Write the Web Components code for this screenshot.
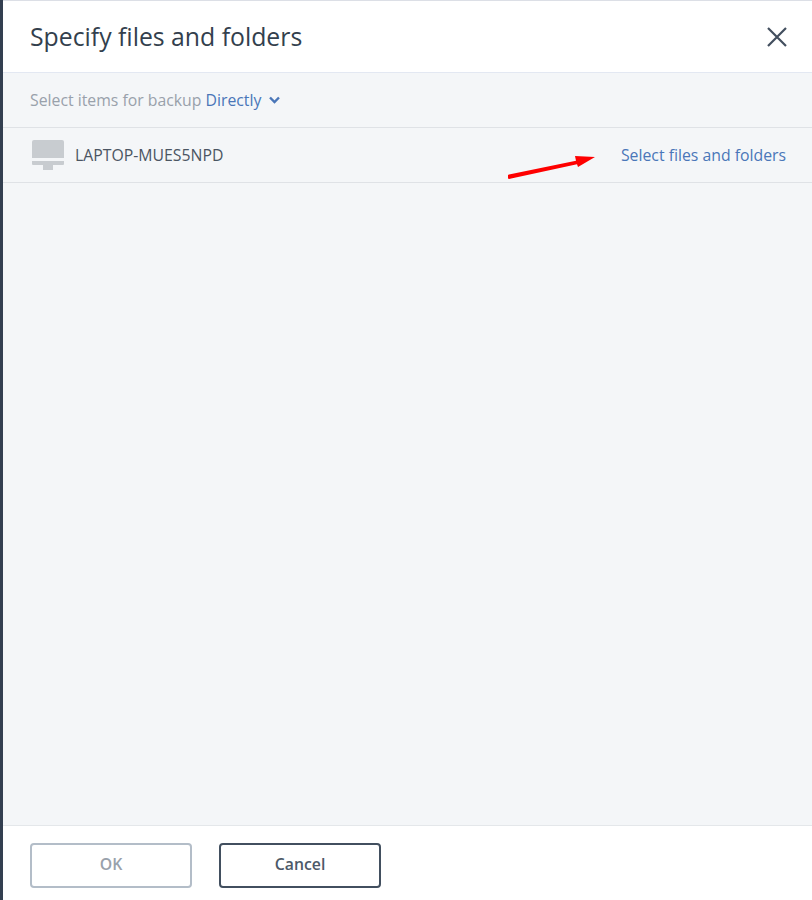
<!DOCTYPE html>
<html>
<head>
<meta charset="utf-8">
<title>Specify files and folders</title>
<style>
  html, body { margin: 0; height: 100%; }
  body { font-family: "Open Sans", "Liberation Sans", sans-serif; }
</style>
</head>
<body>
<backup-dialog>
  <span slot="title">Specify files and folders</span>
  <source-row slot="source" label="Select items for backup" value="Directly"></source-row>
  <machine-row name="LAPTOP-MUES5NPD" action="Select files and folders"></machine-row>
  <dialog-button slot="footer" disabled>OK</dialog-button>
  <dialog-button slot="footer">Cancel</dialog-button>
</backup-dialog>

<script>
class BackupDialog extends HTMLElement {
  connectedCallback() {
    this.attachShadow({ mode: "open" });
    this.shadowRoot.innerHTML = `
      <style>
        :host {
          display: flex;
          flex-direction: column;
          box-sizing: border-box;
          height: 900px;
          background: #f4f6f8;
          border-left: 3px solid #333f50;
        }
        header {
          flex: none;
          box-sizing: border-box;
          height: 73px;
          display: flex;
          align-items: center;
          justify-content: space-between;
          padding: 1px 24px 0 27px;
          background: #fff;
          border-top: 1px solid #dcdfe6;
          border-bottom: 1px solid #e3e8f2;
          font-size: 24.8px;
          color: #333f4d;
        }
        ::slotted([slot="title"]) { margin-top: -2px; }
        svg { display: block; }
        main { flex: 1; }
        footer {
          flex: none;
          box-sizing: border-box;
          height: 75px;
          display: flex;
          gap: 27px;
          padding: 17px 0 0 27px;
          background: #fff;
          border-top: 1px solid #e4e7ea;
        }
      </style>
      <header>
        <slot name="title"></slot>
        <svg width="22" height="22" viewBox="0 0 22 22" fill="none" stroke="#424e5e" stroke-width="2.2">
          <path d="M2 2 L20 20 M20 2 L2 20"/>
        </svg>
      </header>
      <slot name="source"></slot>
      <main><slot></slot></main>
      <footer><slot name="footer"></slot></footer>
    `;
  }
}

class SourceRow extends HTMLElement {
  connectedCallback() {
    this.attachShadow({ mode: "open" });
    this.shadowRoot.innerHTML = `
      <style>
        :host {
          display: flex;
          align-items: center;
          box-sizing: border-box;
          height: 55px;
          padding-left: 27px;
          border-bottom: 1px solid #dfe2e6;
          font-size: 15.8px;
          color: #99a1ab;
        }
        b { font-weight: 400; color: #4a76b8; margin-left: 4px; }
        svg { display: block; margin: 0 0 0 8px; }
      </style>
      <span>${this.getAttribute("label")}</span>
      <b>${this.getAttribute("value")}</b>
      <svg width="11" height="8" viewBox="0 0 11 8" fill="none" stroke="#4a76b8" stroke-width="2.4">
        <path d="M1 1.5 L5.5 6 L10 1.5"/>
      </svg>
    `;
  }
}

class MachineRow extends HTMLElement {
  connectedCallback() {
    this.attachShadow({ mode: "open" });
    this.shadowRoot.innerHTML = `
      <style>
        :host {
          display: flex;
          align-items: center;
          position: relative;
          box-sizing: border-box;
          height: 55px;
          padding: 0 26px 0 29px;
          border-bottom: 1px solid #dfe2e6;
          font-size: 15.8px;
          color: #4b5562;
        }
        .icon { display: block; flex: none; margin-right: 11px; }
        .name { flex: 1; }
        .action { color: #4a76b8; }
        .arrow { position: absolute; left: 505px; top: 26px; }
      </style>
      <svg class="icon" width="32" height="30" viewBox="0 0 32 30" fill="#c8ccd0">
        <path d="M2 0 H30 A2 2 0 0 1 32 2 V18 H0 V2 A2 2 0 0 1 2 0 Z"/>
        <path d="M0 21 H32 V24 A1 1 0 0 1 31 25 H1 A1 1 0 0 1 0 24 Z"/>
        <rect x="11" y="25" width="10" height="5"/>
      </svg>
      <span class="name">${this.getAttribute("name")}</span>
      <span class="action">${this.getAttribute("action")}</span>
      <svg class="arrow" width="90" height="26" viewBox="0 0 90 26" fill="#fe0000">
        <path d="M1 20.6 L68 6.8 L67 2 L87 3 L70 13 L69 10.2 L2 24.8 A2.1 2.1 0 0 1 1 20.6 Z"/>
      </svg>
    `;
  }
}

class DialogButton extends HTMLElement {
  connectedCallback() {
    this.attachShadow({ mode: "open" });
    this.shadowRoot.innerHTML = `
      <style>
        :host {
          display: flex;
          align-items: center;
          justify-content: center;
          box-sizing: border-box;
          width: 162px;
          height: 45px;
          padding-bottom: 3px;
          border: 2px solid #424f5f;
          border-radius: 4px;
          font-size: 15.8px;
          font-weight: 600;
          color: #4d5968;
        }
        :host([disabled]) {
          border-color: #b3bdc8;
          color: #99a1ab;
        }
      </style>
      <slot></slot>
    `;
  }
}

customElements.define("backup-dialog", BackupDialog);
customElements.define("source-row", SourceRow);
customElements.define("machine-row", MachineRow);
customElements.define("dialog-button", DialogButton);
</script>
</body>
</html>
